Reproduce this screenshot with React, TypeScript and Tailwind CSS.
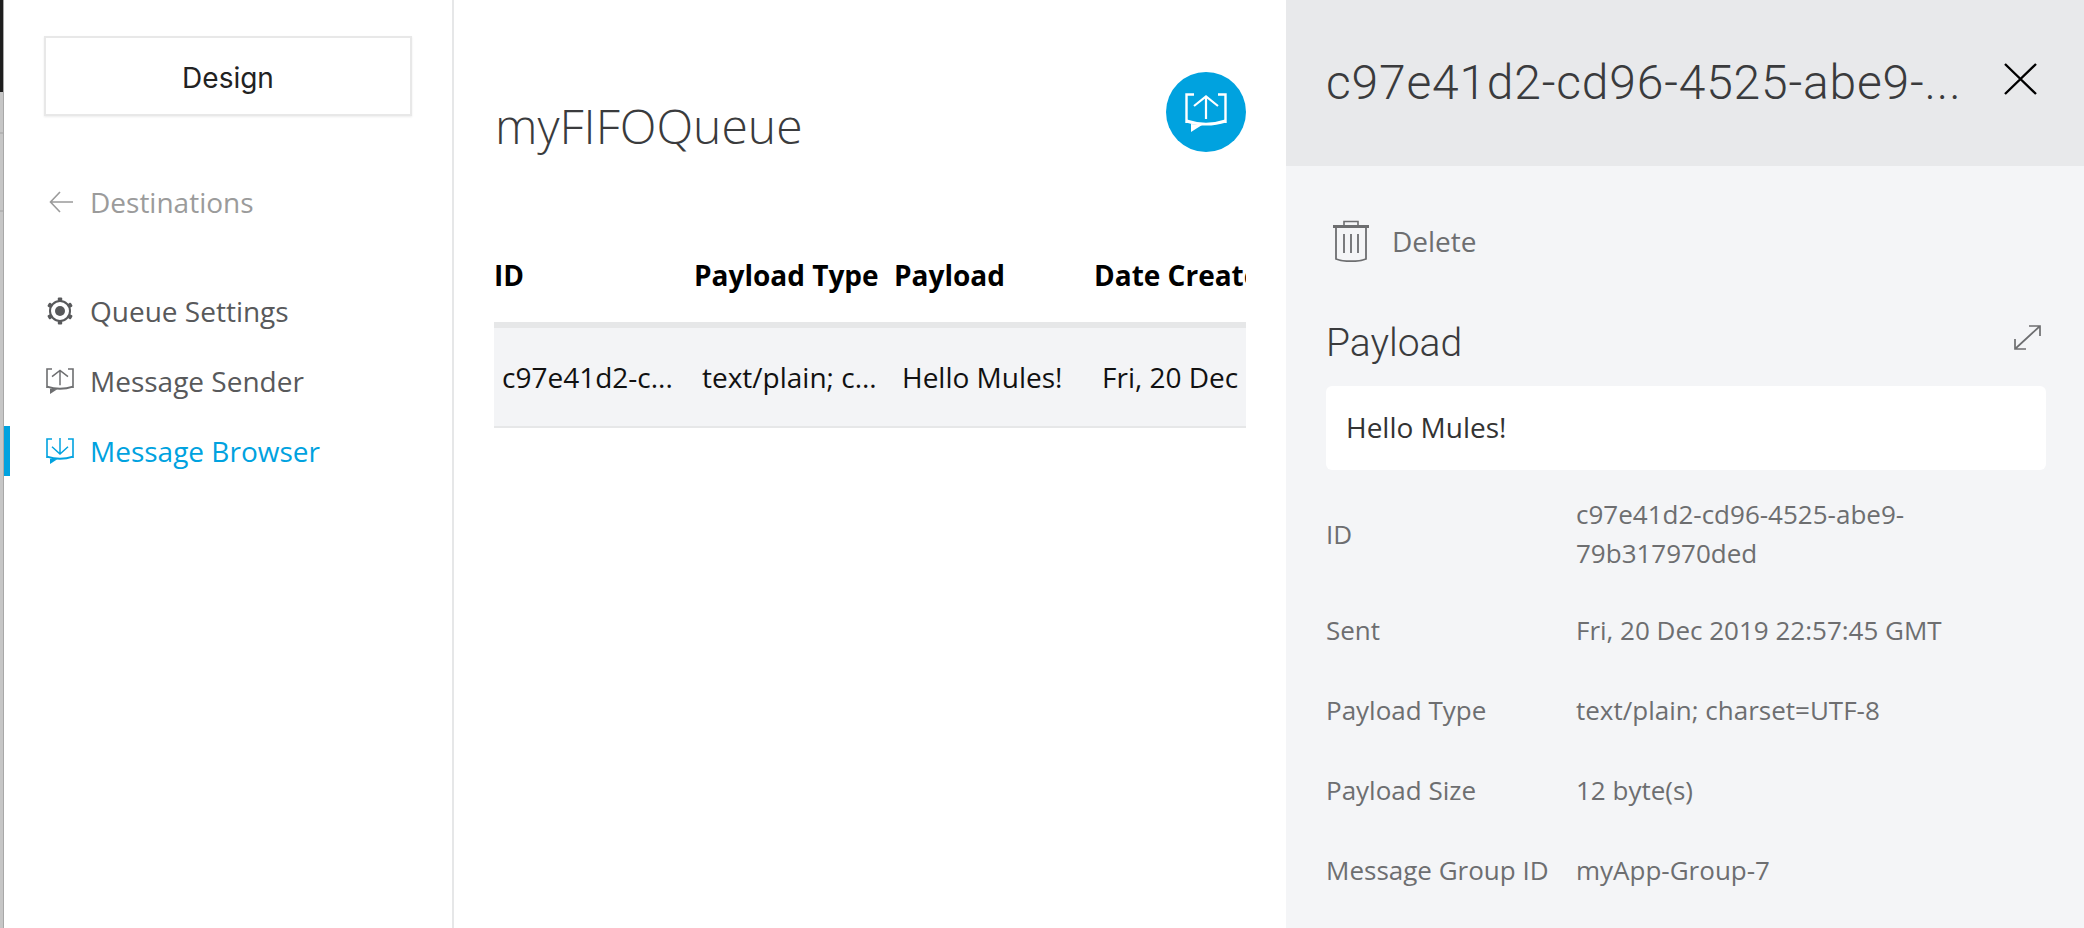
import React from 'react';

const MessageIcon = ({ dir, className }: { dir: 'up' | 'down'; className?: string }) => (
  <svg viewBox="0 0 42 39" fill="none" stroke="currentColor" className={className}>
    <path d="M9 1.5H1.5V30M33 1.5h7.5V30" strokeWidth="2.4" />
    <path d="M1.5 28c12 4 27 4 39 0" strokeWidth="3" />
    <path d="M6 31v8l11-7z" fill="currentColor" stroke="none" />
    {dir === 'up' ? (
      <path d="M21 26V3.5M9 13 21 3.5 33 13" strokeWidth="2.2" />
    ) : (
      <path d="M21 -2V23M9 13l12 11 12-11" strokeWidth="2.2" />
    )}
  </svg>
);

const GearIcon = ({ className }: { className?: string }) => (
  <svg viewBox="0 0 28 28" className={className} fill="currentColor">
    <circle cx="14" cy="14" r="10" fill="none" stroke="currentColor" strokeWidth="2" />
    <circle cx="14" cy="14" r="5" />
    {[0, 60, 120, 180, 240, 300].map((deg) => (
      <rect key={deg} x="11.8" y="0.5" width="4.4" height="3.6" rx="1" transform={`rotate(${deg} 14 14)`} />
    ))}
  </svg>
);

const TrashIcon = ({ className }: { className?: string }) => (
  <svg viewBox="0 0 36 42" fill="none" stroke="currentColor" className={className}>
    <path d="M11 5V1.5h14V5" strokeWidth="1.6" />
    <path d="M0 6.5h36" strokeWidth="3" />
    <path d="M3 7v32c8 3 22 3 30 0V7" strokeWidth="1.8" />
    <path d="M11 14v19M18 14v19M25 14v19" strokeWidth="1.8" />
  </svg>
);

const ExpandIcon = ({ className }: { className?: string }) => (
  <svg viewBox="0 0 27 25" fill="none" stroke="currentColor" strokeWidth="1.7" className={className}>
    <path d="M1 24 26 1M15 1h11v10M1 14v10h11" />
  </svg>
);

const details = [
  { label: 'Sent', value: 'Fri, 20 Dec 2019 22:57:45 GMT' },
  { label: 'Payload Type', value: 'text/plain; charset=UTF-8' },
  { label: 'Payload Size', value: '12 byte(s)' },
  { label: 'Message Group ID', value: 'myApp-Group-7' },
];

const columns = [
  { head: 'ID', cell: 'c97e41d2-c...' },
  { head: 'Payload Type', cell: 'text/plain; c...' },
  { head: 'Payload', cell: 'Hello Mules!' },
  { head: 'Date Created', cell: 'Fri, 20 Dec' },
];

export default function App() {
  return (
    <div className="flex h-[928px] w-[2084px] overflow-hidden bg-white text-[26px] font-['Open_Sans',sans-serif]">
      {/* window edge */}
      <div className="flex w-[4px] flex-col border-r border-[#a8a8a8] bg-[#c6c6c6]">
        <div className="h-[92px] bg-[#1e1e1e]" />
        <div className="mt-[40px] h-[2px] bg-[#b4b4b4]" />
        <div className="mt-[76px] h-[2px] bg-[#b4b4b4]" />
      </div>

      {/* Sidebar */}
      <aside className="w-[450px] shrink-0 border-r-2 border-[#e6e7e8] text-[28px]">
        <div className="mt-[36px] ml-[40px] flex h-[80px] w-[368px] items-center justify-center border-2 border-[#e8e8e8] pt-[3px] shadow-[0_1px_2px_rgba(0,0,0,0.08)] font-['Inter',sans-serif] text-[#222]">
          Design
        </div>
        <div className="mt-[56px] flex h-[60px] items-center gap-[17px] pl-[45px] text-[#9b9b9b]">
          <svg viewBox="0 0 24 22" fill="none" stroke="currentColor" strokeWidth="1.6" className="h-[22px] w-[24px]">
            <path d="M24 11H1.5M11 1 1.5 11 11 21" />
          </svg>
          <span>Destinations</span>
        </div>
        <div className="mt-[44px] flex flex-col">
          <div className="flex h-[70px] items-center gap-[16px] pl-[42px] text-[#58595b]">
            <GearIcon className="h-[28px] w-[28px]" />
            <span>Queue Settings</span>
          </div>
          <div className="flex h-[70px] items-center gap-[16px] pl-[42px] text-[#58595b]">
            <MessageIcon dir="up" className="h-[26px] w-[28px] text-[#6d6e70]" />
            <span>Message Sender</span>
          </div>
          <div className="relative flex h-[70px] items-center gap-[16px] pl-[42px] text-[#00a2df]">
            <span className="absolute left-0 top-[10px] h-[50px] w-[6px] bg-[#00a2df]" />
            <MessageIcon dir="down" className="h-[26px] w-[28px]" />
            <span>Message Browser</span>
          </div>
        </div>
      </aside>

      {/* Main */}
      <main className="w-[832px] shrink-0 pl-[40px] pr-[40px] text-[28px]">
        <div className="flex h-[152px] items-start justify-between pt-[72px]">
          <h1 className="mt-[24px] ml-[1px] text-[48px] leading-[60px] font-light text-[#3a3b3d]">myFIFOQueue</h1>
          <div className="flex h-[80px] w-[80px] items-center justify-center rounded-full bg-[#00a2df] text-white">
            <MessageIcon dir="up" className="h-[39px] w-[42px]" />
          </div>
        </div>
        <div className="mt-[90px] flex h-[80px] items-center overflow-hidden pb-[14px] font-bold text-black">
          {columns.map((col) => (
            <div key={col.head} className="w-[200px] shrink-0 whitespace-nowrap">{col.head}</div>
          ))}
        </div>
        <div className="flex h-[106px] items-center overflow-hidden border-t-[6px] border-b-2 border-[#e6e7e8] bg-[#f3f4f6] text-[#111]">
          {columns.map((col) => (
            <div key={col.cell} className="w-[200px] shrink-0 whitespace-nowrap pl-[8px]">{col.cell}</div>
          ))}
        </div>
      </main>

      {/* Detail panel */}
      <section className="min-w-0 flex-1 bg-[#f4f5f7]">
        <header className="flex h-[166px] items-start justify-between bg-[#e8e9eb] pl-[40px] pr-[47px] pt-[50px]">
          <div className="whitespace-nowrap font-['Roboto',sans-serif] text-[48px] font-light tracking-[0.8px] leading-[66px] text-[#3a3b3d]">
            c97e41d2-cd96-4525-abe9-...
          </div>
          <svg viewBox="0 0 33 32" fill="none" stroke="black" strokeWidth="2.4" className="mt-[13px] h-[32px] w-[33px]">
            <path d="M1 1 32 31M32 1 1 31" />
          </svg>
        </header>
        <div className="pl-[40px] pr-[38px] text-[#6d6e70]">
          <div className="mt-[54px] flex h-[42px] items-center gap-[23px] pl-[7px] text-[28px]">
            <TrashIcon className="h-[42px] w-[36px]" />
            <span>Delete</span>
          </div>
          <div className="mt-[58px] flex h-[66px] items-start justify-between">
            <h2 className="mt-[-5px] font-['Roboto',sans-serif] text-[39px] font-light leading-[56px] text-[#3a3b3d]">Payload</h2>
            <ExpandIcon className="mt-[5px] mr-[5px] h-[25px] w-[27px] text-[#6d6e70]" />
          </div>
          <div className="flex h-[84px] items-center rounded-[6px] bg-white pb-[2px] pl-[20px] text-[28px] text-[#333]">Hello Mules!</div>
          <div className="mt-[25px] flex h-[78px] items-center">
            <div className="w-[250px]">ID</div>
            <div className="w-[330px] leading-[39px] break-all">c97e41d2-cd96-4525-abe9-<br />79b317970ded</div>
          </div>
          <div className="mt-[17px] flex flex-col">
            {details.map((row) => (
              <div key={row.label} className="flex h-[80px] items-center whitespace-nowrap">
                <div className="w-[250px]">{row.label}</div>
                <div>{row.value}</div>
              </div>
            ))}
          </div>
        </div>
      </section>
    </div>
  );
}
